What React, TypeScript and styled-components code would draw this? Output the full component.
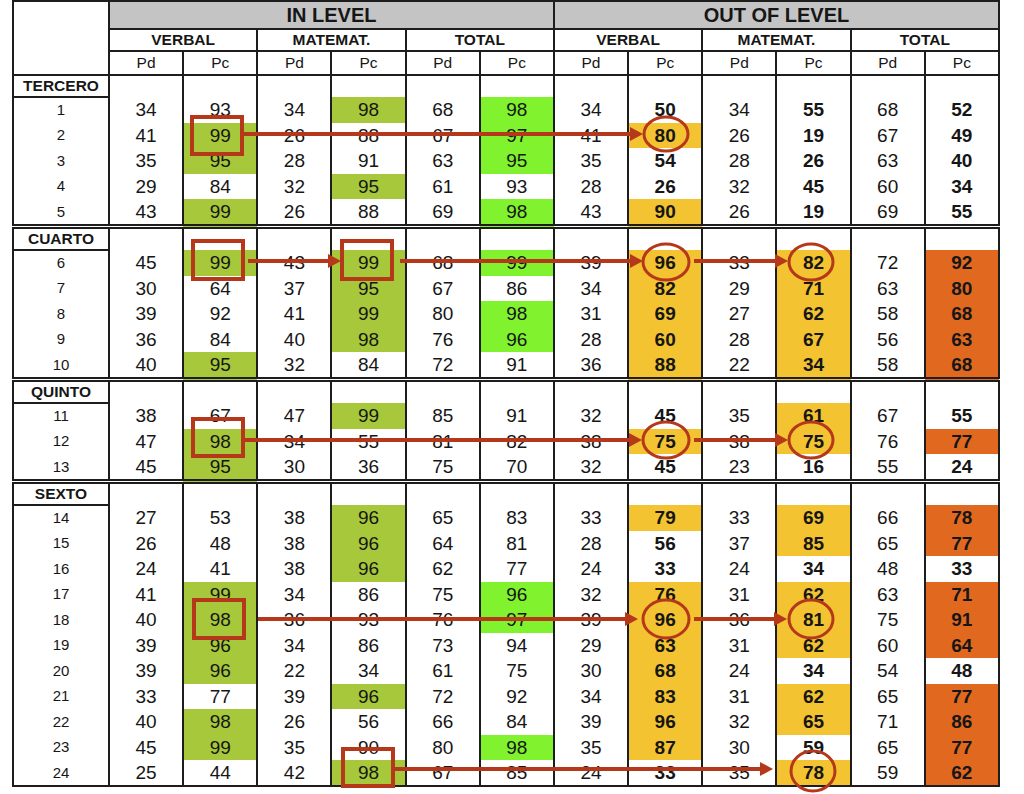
import React from 'react';
import styled, { createGlobalStyle } from 'styled-components';

const GlobalStyle = createGlobalStyle`
  html, body { margin: 0; padding: 0; background: #ffffff; }
  body { font-family: "Liberation Sans", Arial, sans-serif; color: #161616; }
`;

const LINE = '#1d1d1d';
const RED = '#b5381b';

type Fill = '' | 'o' | 'g' | 'y' | 'r';
const FILLS: Record<Fill, string> = {
  '': 'transparent',
  o: '#a6c83a',
  g: '#80f22e',
  y: '#f4c332',
  r: '#e0691f',
};

const Page = styled.div`
  position: relative;
  width: 1024px;
  height: 794px;
  padding-left: 12px;
  box-sizing: border-box;
  overflow: hidden;
`;

const Table = styled.table`
  border-collapse: collapse;
  table-layout: fixed;
  width: 988px;
  border: 2px solid ${LINE};
`;

const Corner = styled.th`
  border: 2px solid ${LINE};
  background: #ffffff;
`;

const GroupHead = styled.th`
  height: 26px;
  padding: 0;
  background: #c4c4c4;
  border: 2px solid ${LINE};
  font-size: 20px;
  font-weight: 700;
  line-height: 24px;
`;

const SubHead = styled.th`
  height: 20px;
  padding: 0;
  border: 2px solid ${LINE};
  font-size: 15.5px;
  font-weight: 700;
  line-height: 20px;
`;

const UnitHead = styled.th`
  height: 22px;
  padding: 0;
  border: 2px solid ${LINE};
  font-size: 15.5px;
  font-weight: 400;
  line-height: 22px;
`;

const SectionRow = styled.tr<{ $first: boolean }>`
  border-top: ${(p) => (p.$first ? `2px solid ${LINE}` : `5px double ${LINE}`)};
  height: ${(p) => (p.$first ? 20 : 22)}px;
`;

const SectionLabel = styled.td`
  padding: 0;
  border-left: 2px solid ${LINE};
  border-right: 2px solid ${LINE};
  border-bottom: 2px solid ${LINE};
  text-align: center;
  font-size: 15.5px;
  font-weight: 700;
  line-height: 20px;
`;

const Spacer = styled.td`
  padding: 0;
  border-left: 2px solid ${LINE};
  border-right: 2px solid ${LINE};
`;

const DataRow = styled.tr`
  height: 25.5px;
`;

const RowLabel = styled.td`
  padding: 0;
  border-left: 2px solid ${LINE};
  border-right: 2px solid ${LINE};
  text-align: center;
  font-size: 15px;
  line-height: 24px;
`;

const Value = styled.td<{ $fill: Fill; $bold: boolean }>`
  padding: 0;
  border-left: 2px solid ${LINE};
  border-right: 2px solid ${LINE};
  background: ${(p) => FILLS[p.$fill]};
  text-align: center;
  font-size: 19px;
  font-weight: ${(p) => (p.$bold ? 700 : 400)};
  line-height: 25px;
`;

const Overlay = styled.svg`
  position: absolute;
  left: 0;
  top: 0;
  width: 1024px;
  height: 794px;
  pointer-events: none;
`;

type Section = { name: string; rows: string[] };

const SECTIONS: Section[] = [
  {
    name: 'TERCERO',
    rows: [
      '1|34 93 34 98o 68 98g 34 50 34 55 68 52',
      '2|41 99o 26 88 67 97g 41 80y 26 19 67 49',
      '3|35 95o 28 91 63 95g 35 54 28 26 63 40',
      '4|29 84 32 95o 61 93 28 26 32 45 60 34',
      '5|43 99o 26 88 69 98g 43 90y 26 19 69 55',
    ],
  },
  {
    name: 'CUARTO',
    rows: [
      '6|45 99o 43 99o 68 99g 39 96y 33 82y 72 92r',
      '7|30 64 37 95o 67 86 34 82y 29 71y 63 80r',
      '8|39 92 41 99o 80 98g 31 69y 27 62y 58 68r',
      '9|36 84 40 98o 76 96g 28 60y 28 67y 56 63r',
      '10|40 95o 32 84 72 91 36 88y 22 34y 58 68r',
    ],
  },
  {
    name: 'QUINTO',
    rows: [
      '11|38 67 47 99o 85 91 32 45 35 61y 67 55',
      '12|47 98o 34 55 81 82 38 75y 38 75y 76 77r',
      '13|45 95o 30 36 75 70 32 45 23 16 55 24',
    ],
  },
  {
    name: 'SEXTO',
    rows: [
      '14|27 53 38 96o 65 83 33 79y 33 69y 66 78r',
      '15|26 48 38 96o 64 81 28 56 37 85y 65 77r',
      '16|24 41 38 96o 62 77 24 33 24 34 48 33',
      '17|41 99o 34 86 75 96g 32 76y 31 62y 63 71r',
      '18|40 98o 36 93 76 97g 39 96y 36 81y 75 91r',
      '19|39 96o 34 86 73 94 29 63y 31 62y 60 64r',
      '20|39 96o 22 34 61 75 30 68y 24 34 54 48',
      '21|33 77 39 96o 72 92 34 83y 31 62y 65 77r',
      '22|40 98o 26 56 66 84 39 96y 32 65y 71 86r',
      '23|45 99o 35 90 80 98g 35 87y 30 59 65 77r',
      '24|25 44 42 98o 67 85 24 33 35 78y 59 62r',
    ],
  },
];

const SUBJECTS = ['VERBAL', 'MATEMAT.', 'TOTAL'];

const parseCell = (raw: string): { text: string; fill: Fill } => {
  const last = raw[raw.length - 1];
  if (/[ogyr]/.test(last)) return { text: raw.slice(0, -1), fill: last as Fill };
  return { text: raw, fill: '' };
};

type Arrow = { x1: number; x2: number; y: number };
type Box = { x: number; y: number; w: number; h: number };
type Ring = { cx: number; cy: number; rx: number; ry: number };

const BOXES: Box[] = [
  { x: 192, y: 117, w: 50, h: 37 },
  { x: 193, y: 241, w: 50, h: 38 },
  { x: 342, y: 241, w: 50, h: 38 },
  { x: 193, y: 419, w: 50, h: 37 },
  { x: 194, y: 600, w: 50, h: 38 },
  { x: 343, y: 749, w: 50, h: 37 },
];

const ARROWS: Arrow[] = [
  { x1: 242, x2: 643, y: 134 },
  { x1: 248, x2: 341, y: 261 },
  { x1: 400, x2: 643, y: 261 },
  { x1: 694, x2: 788, y: 261 },
  { x1: 243, x2: 642, y: 440 },
  { x1: 694, x2: 788, y: 440 },
  { x1: 258, x2: 638, y: 619 },
  { x1: 694, x2: 787, y: 619 },
  { x1: 393, x2: 773, y: 769 },
];

const RINGS: Ring[] = [
  { cx: 666, cy: 134, rx: 22, ry: 17 },
  { cx: 666, cy: 262, rx: 23, ry: 18 },
  { cx: 811, cy: 262, rx: 22, ry: 18 },
  { cx: 666, cy: 440, rx: 23, ry: 18 },
  { cx: 811, cy: 440, rx: 22, ry: 18 },
  { cx: 666, cy: 619, rx: 23, ry: 19 },
  { cx: 811, cy: 619, rx: 22, ry: 19 },
  { cx: 813, cy: 771, rx: 22, ry: 20 },
];

const Annotations: React.FC = () => (
  <Overlay viewBox="0 0 1024 794">
    {BOXES.map((b, i) => (
      <rect key={`b${i}`} x={b.x} y={b.y} width={b.w} height={b.h} fill="none" stroke={RED} strokeWidth={4} />
    ))}
    {ARROWS.map((a, i) => (
      <g key={`a${i}`}>
        <line x1={a.x1} y1={a.y} x2={a.x2 - 11} y2={a.y} stroke={RED} strokeWidth={4} />
        <polygon points={`${a.x2},${a.y} ${a.x2 - 13},${a.y - 7} ${a.x2 - 13},${a.y + 7}`} fill={RED} />
      </g>
    ))}
    {RINGS.map((r, i) => (
      <ellipse key={`r${i}`} cx={r.cx} cy={r.cy} rx={r.rx} ry={r.ry} fill="none" stroke={RED} strokeWidth={3} />
    ))}
  </Overlay>
);

const App: React.FC = () => (
  <Page>
    <GlobalStyle />
    <Table>
      <colgroup>
        <col style={{ width: 96 }} />
        {Array.from({ length: 12 }).map((_, i) => (
          <col key={i} />
        ))}
      </colgroup>
      <thead>
        <tr>
          <Corner rowSpan={3} />
          <GroupHead colSpan={6}>IN LEVEL</GroupHead>
          <GroupHead colSpan={6}>OUT OF LEVEL</GroupHead>
        </tr>
        <tr>
          {[...SUBJECTS, ...SUBJECTS].map((s, i) => (
            <SubHead key={i} colSpan={2}>
              {s}
            </SubHead>
          ))}
        </tr>
        <tr>
          {Array.from({ length: 12 }).map((_, i) => (
            <UnitHead key={i}>{i % 2 === 0 ? 'Pd' : 'Pc'}</UnitHead>
          ))}
        </tr>
      </thead>
      {SECTIONS.map((sec, si) => (
        <tbody key={sec.name}>
          <SectionRow $first={si === 0}>
            <SectionLabel>{sec.name}</SectionLabel>
            {Array.from({ length: 12 }).map((_, i) => (
              <Spacer key={i} />
            ))}
          </SectionRow>
          {sec.rows.map((line) => {
            const [label, rest] = line.split('|');
            const cells = rest.split(' ').map(parseCell);
            return (
              <DataRow key={label}>
                <RowLabel>{label}</RowLabel>
                {cells.map((c, ci) => (
                  <Value key={ci} $fill={c.fill} $bold={ci >= 6 && ci % 2 === 1}>
                    {c.text}
                  </Value>
                ))}
              </DataRow>
            );
          })}
        </tbody>
      ))}
    </Table>
    <Annotations />
  </Page>
);

export default App;
